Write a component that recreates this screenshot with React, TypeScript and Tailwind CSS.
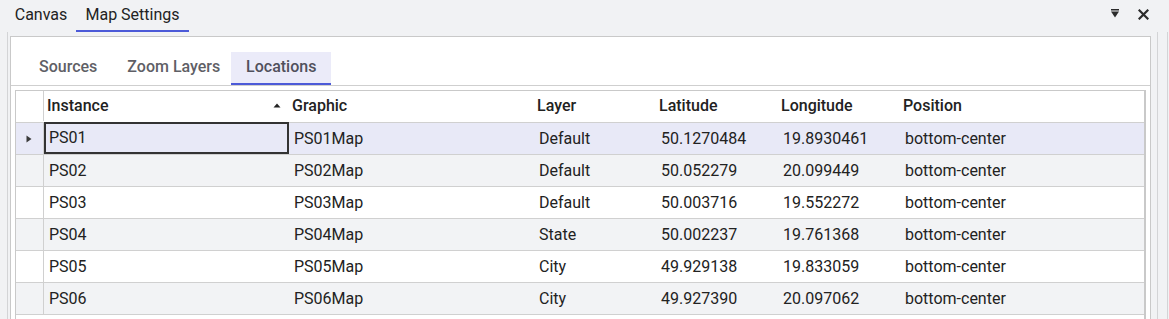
import React from 'react';

const rows = [
  { instance: 'PS01', graphic: 'PS01Map', layer: 'Default', lat: '50.1270484', lng: '19.8930461', pos: 'bottom-center' },
  { instance: 'PS02', graphic: 'PS02Map', layer: 'Default', lat: '50.052279', lng: '20.099449', pos: 'bottom-center' },
  { instance: 'PS03', graphic: 'PS03Map', layer: 'Default', lat: '50.003716', lng: '19.552272', pos: 'bottom-center' },
  { instance: 'PS04', graphic: 'PS04Map', layer: 'State', lat: '50.002237', lng: '19.761368', pos: 'bottom-center' },
  { instance: 'PS05', graphic: 'PS05Map', layer: 'City', lat: '49.929138', lng: '19.833059', pos: 'bottom-center' },
  { instance: 'PS06', graphic: 'PS06Map', layer: 'City', lat: '49.927390', lng: '20.097062', pos: 'bottom-center' },
];

const PinMenuIcon = () => (
  <svg width="10" height="10" viewBox="0 0 10 10">
    <rect x="1" y="0" width="8" height="1.5" fill="#2b2b2b" />
    <path d="M1 2.5 H9 L5 8.5 Z" fill="#2b2b2b" />
  </svg>
);

const CloseIcon = () => (
  <svg width="11" height="11" viewBox="0 0 11 11">
    <path d="M1.5 1.5 L9.5 9.5 M9.5 1.5 L1.5 9.5" stroke="#2b2b2b" strokeWidth="2.2" strokeLinecap="square" />
  </svg>
);

export default function App() {
  return (
    <div
      className="w-[1169px] h-[319px] overflow-hidden bg-[#f1f2f4] text-[#222] flex flex-col"
      style={{ fontFamily: 'Roboto, "Liberation Sans", sans-serif' }}
    >
      {/* document tabs */}
      <div className="h-[32px] flex items-stretch shrink-0">
        <div className="flex items-stretch pl-[6px]">
          <div className="w-[70px] flex items-center justify-center text-[16px] pb-[2px]">Canvas</div>
          <div className="w-[113px] flex items-center justify-center text-[16px] border-b-2 border-[#4c5ad8]">Map Settings</div>
        </div>
        <div className="flex-1" />
        <div className="flex items-center gap-[18px] pr-[20px] pb-[4px]">
          <PinMenuIcon />
          <CloseIcon />
        </div>
      </div>

      <div className="flex-1 flex items-stretch min-h-0">
        <div className="ml-[7px] w-[1151px] border-l border-r border-[#d3d4d6] pl-[2px] pt-[4px] min-h-0">
          <div className="w-[1141px] h-full bg-white border border-[#c9c9c9] border-b-0 flex flex-col">
            {/* inner tabs */}
            <div className="h-[49px] shrink-0 border-b border-[#cfcfcf] flex items-end pl-[13px]">
              <div className="h-[33px] pl-[15px] pr-[17px] pb-[3px] flex items-center text-[16px] font-medium text-[#5f5f66]">Sources</div>
              <div className="h-[33px] pl-[13px] pr-[11px] pb-[3px] flex items-center text-[16px] font-medium text-[#5f5f66]">Zoom Layers</div>
              <div className="h-[33px] w-[100px] pb-[1px] flex items-center justify-center text-[16px] font-medium text-[#50505c] bg-[#ebebf9] border-b-2 border-[#4c5ad8]">Locations</div>
            </div>

            {/* grid */}
            <div className="flex-1 min-h-0 pl-[4px] pr-[4px] pt-[4px]">
              <div className="h-full border-t border-l border-r-2 border-[#c9c9c9] flex flex-col">
                <div className="h-[32px] shrink-0 flex border-b border-[#d0d0d0] text-[16px] font-medium pb-[1px]">
                  <div className="w-[28px] shrink-0 border-r border-[#d0d0d0]" />
                  <div className="w-[245px] shrink-0 pl-[3px] flex items-center relative">
                    Instance
                    <svg className="absolute right-[8px] top-[12px]" width="8" height="5" viewBox="0 0 8 5">
                      <path d="M0.5 4.5 L4 0.5 L7.5 4.5 Z" fill="#222" />
                    </svg>
                  </div>
                  <div className="w-[245px] shrink-0 pl-[3px] flex items-center">Graphic</div>
                  <div className="w-[122px] shrink-0 pl-[3px] flex items-center">Layer</div>
                  <div className="w-[122px] shrink-0 pl-[3px] flex items-center">Latitude</div>
                  <div className="w-[122px] shrink-0 pl-[3px] flex items-center">Longitude</div>
                  <div className="flex-1 pl-[3px] flex items-center">Position</div>
                </div>
                {rows.map((r, i) => {
                  const bg = i === 0 ? 'bg-[#e8e9f7]' : i % 2 === 1 ? 'bg-[#f2f3f5]' : 'bg-white';
                  return (
                    <div key={r.instance} className={`h-[32px] shrink-0 flex border-b border-[#d0d0d0] text-[16px] ${bg}`}>
                      <div className="w-[28px] shrink-0 border-r border-[#d0d0d0] flex items-center justify-center pr-[2px]">
                        {i === 0 && (
                          <svg width="6" height="8" viewBox="0 0 6 8">
                            <path d="M0.5 0.5 L5.5 4 L0.5 7.5 Z" fill="#3a3a3a" />
                          </svg>
                        )}
                      </div>
                      <div className={`w-[245px] shrink-0 flex items-center ${i === 0 ? 'border-2 border-[#333] pl-[3px] -mt-px' : 'pl-[5px]'}`}>{r.instance}</div>
                      <div className="w-[245px] shrink-0 pl-[5px] flex items-center">{r.graphic}</div>
                      <div className="w-[122px] shrink-0 pl-[5px] flex items-center">{r.layer}</div>
                      <div className="w-[122px] shrink-0 pl-[5px] flex items-center">{r.lat}</div>
                      <div className="w-[122px] shrink-0 pl-[5px] flex items-center">{r.lng}</div>
                      <div className="flex-1 pl-[5px] flex items-center">{r.pos}</div>
                    </div>
                  );
                })}
              </div>
            </div>
          </div>
        </div>
        <div className="w-[9px] shrink-0" />
        <div className="w-px shrink-0 bg-[#d3d4d6]" />
      </div>
    </div>
  );
}
